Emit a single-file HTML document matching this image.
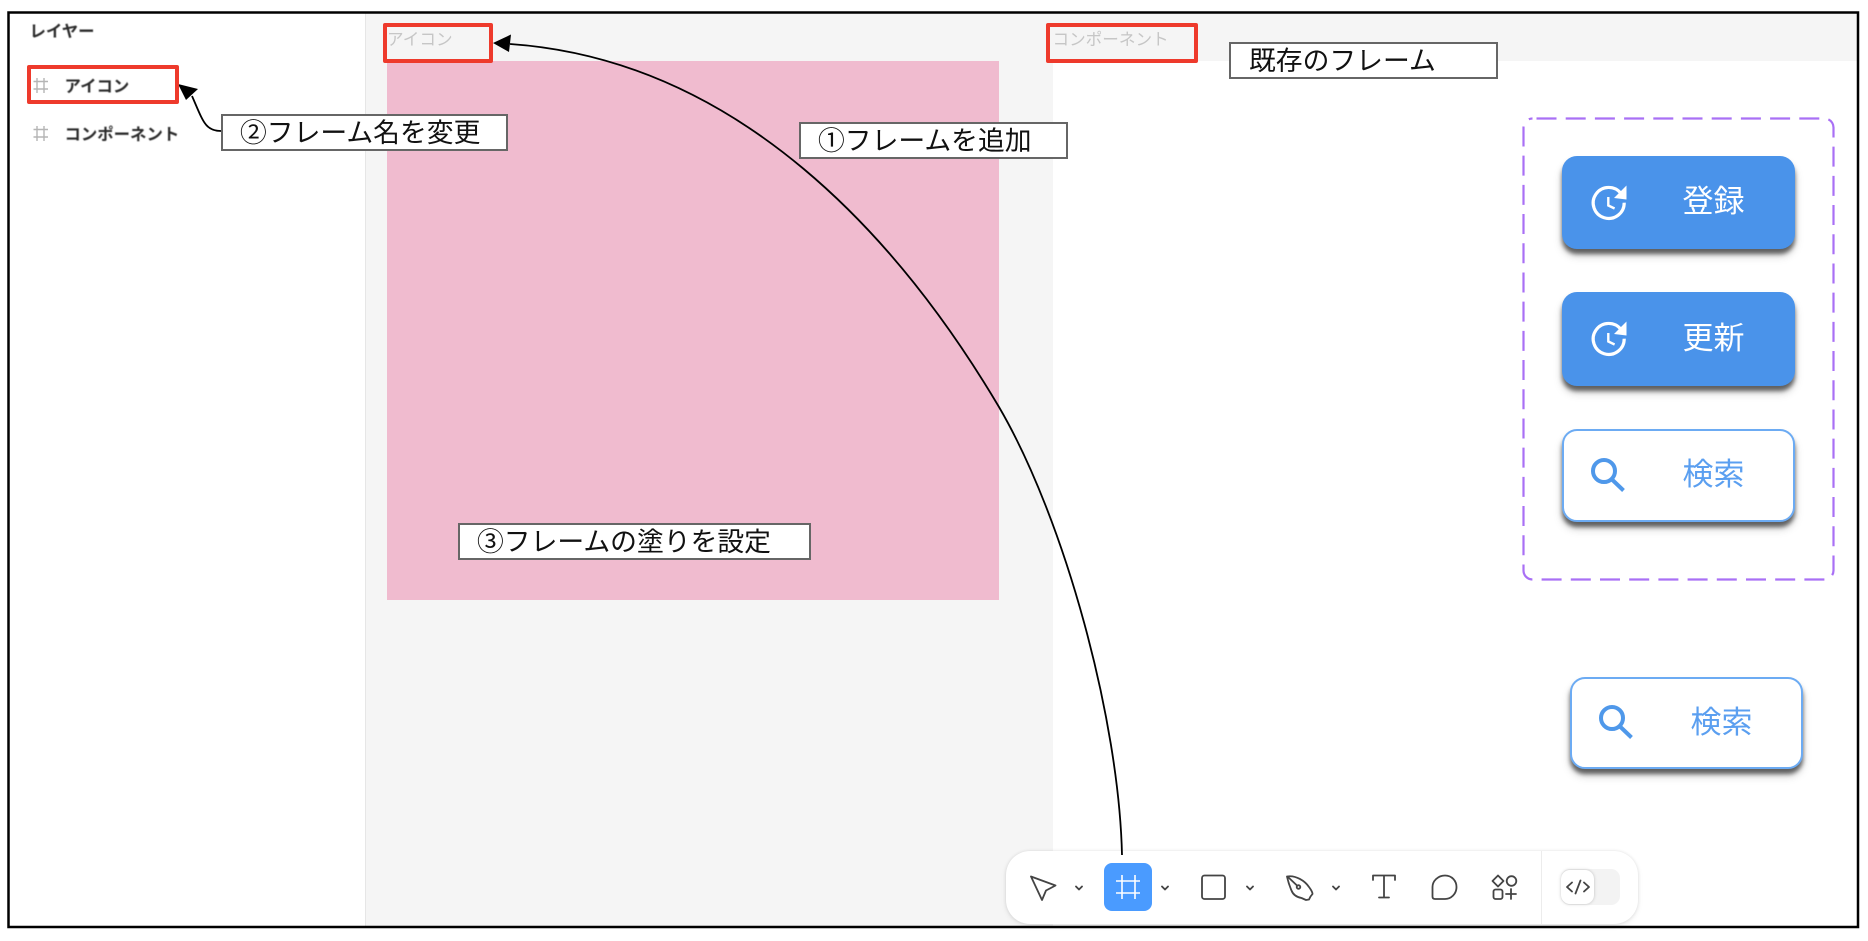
<!DOCTYPE html>
<html lang="ja">
<head>
<meta charset="utf-8">
<title>フレーム</title>
<style>
html,body{margin:0;padding:0;background:#fff;}
body{width:1868px;height:941px;position:relative;overflow:hidden;font-family:"Liberation Sans","Noto Sans CJK JP",sans-serif;}
.a{position:absolute;box-sizing:border-box;}
.t{position:absolute;white-space:nowrap;line-height:1;}
.lab{position:absolute;box-sizing:border-box;background:#fff;border:2px solid #666;}
.ann{position:absolute;white-space:nowrap;line-height:1;font-size:26.8px;color:#111;}
.red{position:absolute;box-sizing:border-box;border:4px solid #ee3a2c;border-radius:2px;}
.side{font-size:16.4px;font-weight:700;color:#2a2a2a;filter:blur(.4px);}
.cv{font-size:16.6px;color:#c6c6c6;filter:blur(.35px);}
.btn{position:absolute;box-sizing:border-box;width:233px;border-radius:15px;box-shadow:0 5px 4px rgba(0,0,0,.55),0 7px 9px rgba(0,0,0,.18);}
.fill{background:#4a93ea;}
.out{background:#fff;border:2px solid #6cabf3;}
.bt{font-size:31px;filter:blur(.3px);}
</style>
</head>
<body>
<!-- frame content -->
<div class="a" style="left:366px;top:12px;width:687px;height:915px;background:#f5f5f5;"></div>
<div class="a" style="left:1053px;top:12px;width:805px;height:49px;background:#f5f5f5;"></div>
<div class="a" style="left:365px;top:12px;width:1px;height:915px;background:#e6e6e6;"></div>
<div class="a" style="left:387px;top:61px;width:612px;height:539px;background:#f0bbcf;"></div>

<div class="t side" style="left:29.5px;top:24px;">レイヤー</div>
<div class="t side" style="left:64.5px;top:79px;">アイコン</div>
<div class="t side" style="left:64.5px;top:126.5px;">コンポーネント</div>
<div class="t cv" style="left:387px;top:31.5px;">アイコン</div>
<div class="t cv" style="left:1052.5px;top:31.5px;">コンポーネント</div>

<!-- buttons -->
<div class="btn fill" style="left:1562px;top:156px;height:93px;"></div>
<div class="btn fill" style="left:1562px;top:292px;height:94px;"></div>
<div class="btn out" style="left:1562px;top:429px;height:93px;"></div>
<div class="btn out" style="left:1570px;top:677px;height:92px;"></div>
<div class="t bt" style="left:1682.5px;top:185.5px;color:#fff;">登録</div>
<div class="t bt" style="left:1682.5px;top:322.5px;color:#fff;">更新</div>
<div class="t bt" style="left:1682.5px;top:458.5px;color:#5b9ff0;">検索</div>
<div class="t bt" style="left:1690.5px;top:706.5px;color:#5b9ff0;">検索</div>

<!-- toolbar -->
<div class="a" style="left:1006px;top:851px;width:632px;height:73px;background:#fff;border-radius:24px;box-shadow:0 0 3px rgba(0,0,0,.1),0 2px 6px rgba(0,0,0,.08);"></div>
<div class="a" style="left:1104px;top:863px;width:48px;height:48px;background:#4a9bff;border-radius:8px;"></div>
<div class="a" style="left:1541px;top:851px;width:1px;height:73px;background:#ececec;"></div>
<div class="a" style="left:1561px;top:869px;width:59px;height:36px;background:#f3f3f3;border-radius:9px;"></div>
<div class="a" style="left:1561px;top:870px;width:33px;height:34px;background:#fff;border-radius:9px;box-shadow:0 0 3px rgba(0,0,0,.22);"></div>

<!-- graphics overlay -->
<svg class="a" style="left:0;top:0;" width="1868" height="941" viewBox="0 0 1868 941" fill="none">
  <!-- outer frame -->
  <rect x="8.5" y="12.5" width="1849.5" height="914.5" stroke="#000" stroke-width="2.5"/>
  <!-- hash icons in layers -->
  <g stroke="#b5b5b5" stroke-width="1.4">
    <path d="M37 78V93M44 78V93M33.5 81.5H48M33.5 89H48"/>
    <path d="M37 126V141M44 126V141M33.5 129.5H48M33.5 137H48"/>
  </g>
  <!-- dashed group -->
  <rect x="1523.5" y="118.5" width="310" height="461" rx="9" stroke="#a970f5" stroke-width="2.2" stroke-dasharray="20 9.2" stroke-dashoffset="-4"/>
  <!-- clock icons -->
  <g stroke="#fff" stroke-width="3.2">
    <path d="M1621 193.5A15.5 15.5 0 1 0 1624.2 202.7"/>
    <path d="M1608.3 197V205.5L1614.6 208.5" stroke-width="2.4"/>
    <path d="M1626.5 185.5V199.5L1614 198Z" fill="#fff" stroke="none"/>
  </g>
  <g stroke="#fff" stroke-width="3.2">
    <path d="M1621 329.5A15.5 15.5 0 1 0 1624.2 338.7"/>
    <path d="M1608.3 333V341.5L1614.6 344.5" stroke-width="2.4"/>
    <path d="M1626.5 321.5V335.5L1614 334Z" fill="#fff" stroke="none"/>
  </g>
  <!-- search icons -->
  <g stroke="#4f98ea" stroke-width="4">
    <circle cx="1604" cy="471" r="11"/>
    <path d="M1612 479.5L1623.5 490.5"/>
    <circle cx="1612" cy="718" r="11"/>
    <path d="M1620 726.5L1631.5 737.5"/>
  </g>
  <!-- toolbar icons -->
  <g stroke="#444" stroke-width="1.8" stroke-linejoin="round" stroke-linecap="round">
    <path d="M1031 876.5L1055.5 885.5L1046 890.5L1042 900Z"/>
    <path d="M1076 886.5L1079 889.5L1082 886.5M1162 886.5L1165 889.5L1168 886.5M1247 886.5L1250 889.5L1253 886.5M1333 886.5L1336 889.5L1339 886.5"/>
    <rect x="1202" y="875.5" width="23" height="23.5" rx="2.5"/>
    <path d="M1287 876.5C1296 875 1305 881 1309 887C1310.5 889 1312.5 892 1312.5 894L1310.5 896.5L1309 899.5L1306 900L1301.5 898C1296 897 1293 894.5 1291.5 890.5C1289.5 886 1288 881 1287 876.5Z"/>
    <path d="M1288 877L1297 885.5"/>
    <circle cx="1298.5" cy="887" r="1.8"/>
    <path d="M1373 880V875.5H1395V880M1384 875.5V897.5M1379 897.5H1389"/>
    <path d="M1445 875.5C1452 875.5 1456.5 881 1456.5 887C1456.5 894 1451 899 1445 899L1435 899Q1432.5 899 1432.5 896.5L1432.5 887C1432.5 881 1438 875.5 1445 875.5Z"/>
    <path d="M1498 875.5L1503.5 881L1498 886.5L1492.5 881Z"/>
    <circle cx="1511.5" cy="881" r="4.8"/>
    <rect x="1493.5" y="889.5" width="9" height="9.5" rx="2"/>
    <path d="M1511 889V899M1506 894H1516"/>
    <path d="M1572 882.5L1567 887L1572 891.5M1584 882.5L1589 887L1584 891.5M1580.5 880.5L1575.5 893.5"/>
  </g>
  <path d="M1122 875V899M1135 875V899M1116 881H1140M1116 893H1140" stroke="#fff" stroke-width="1.6"/>
  <!-- arrows -->
  <path d="M1122 855C1119 720 1065 520 999 407C900 240 740 60 510 44" stroke="#000" stroke-width="1.8"/>
  <path d="M493 43L511 34.5L509 52Z" fill="#000"/>
  <path d="M221 131C205 131 203 121 192 96" stroke="#000" stroke-width="1.8"/>
  <path d="M178 84L198 89L186 100Z" fill="#000"/>
</svg>

<!-- red highlight boxes -->
<div class="red" style="left:26.5px;top:64.5px;width:152.5px;height:39px;"></div>
<div class="red" style="left:382.5px;top:22.5px;width:110.5px;height:40px;"></div>
<div class="red" style="left:1045.5px;top:22.5px;width:152.5px;height:40px;"></div>

<!-- annotation labels -->
<div class="lab" style="left:221px;top:114px;width:287px;height:37px;"></div>
<div class="ann" style="left:240px;top:120px;">②フレーム名を変更</div>
<div class="lab" style="left:799px;top:122px;width:269px;height:37px;"></div>
<div class="ann" style="left:818px;top:128px;">①フレームを追加</div>
<div class="lab" style="left:1229px;top:42px;width:269px;height:37px;"></div>
<div class="ann" style="left:1249px;top:48px;">既存のフレーム</div>
<div class="lab" style="left:458px;top:523px;width:353px;height:37px;"></div>
<div class="ann" style="left:477px;top:529px;">③フレームの塗りを設定</div>
</body>
</html>
